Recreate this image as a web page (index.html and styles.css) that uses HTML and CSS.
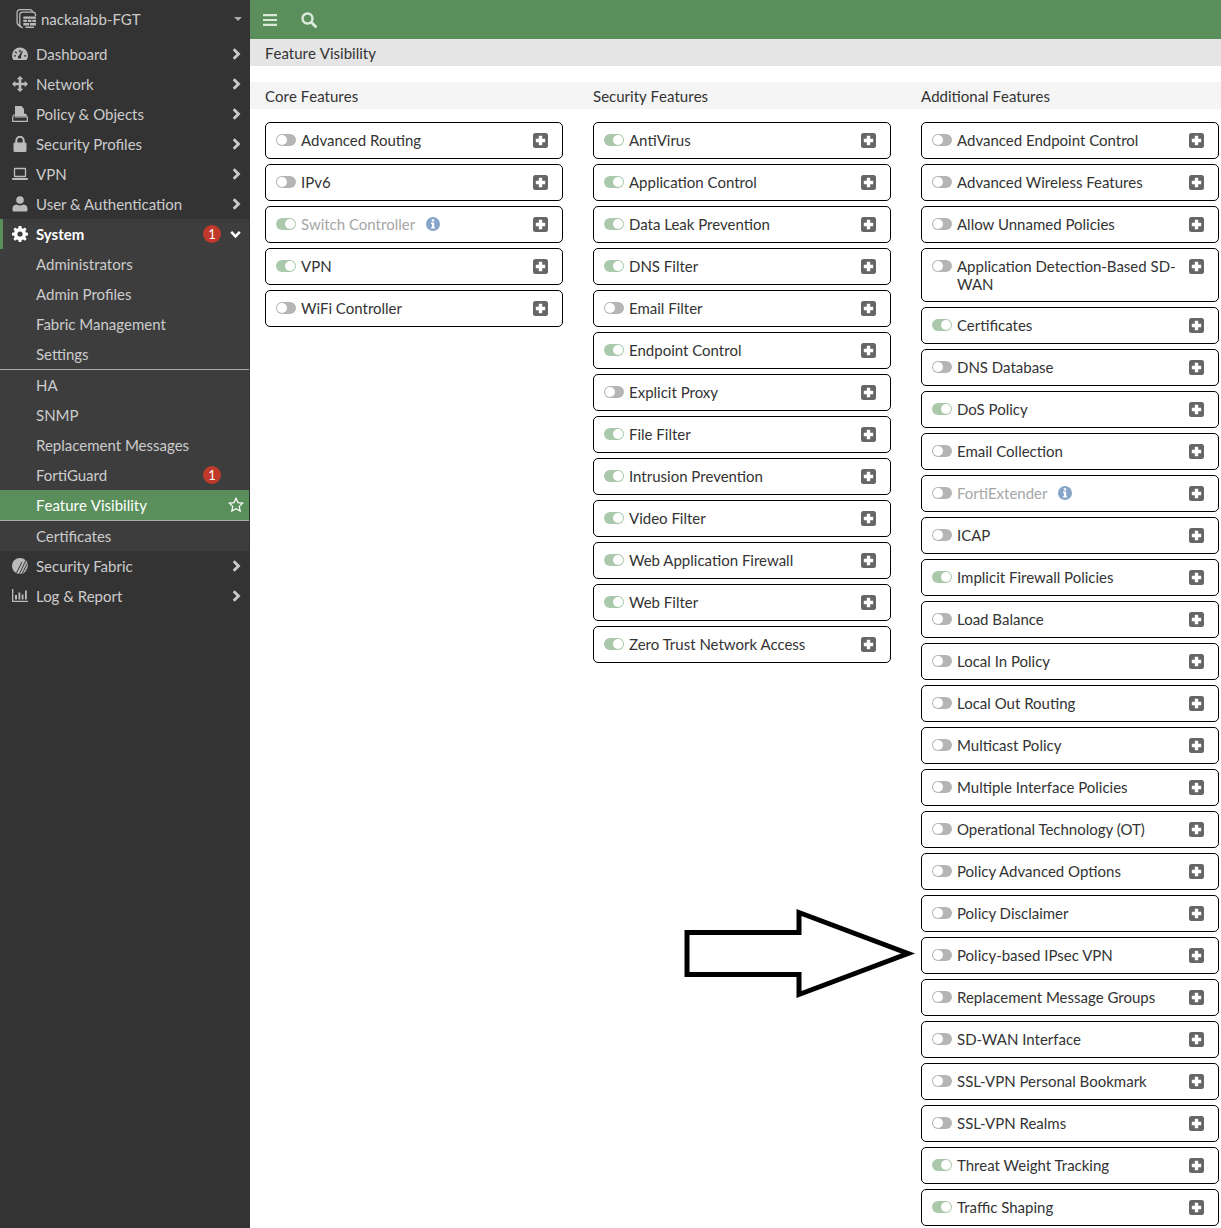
FILE: index.html
```html
<!DOCTYPE html>
<html lang="en">
<head>
<meta charset="utf-8">
<title>Feature Visibility</title>
<link rel="stylesheet" href="styles.css">
</head>
<body>
<svg class="defs" width="0" height="0" aria-hidden="true">
  <symbol id="plus" viewBox="0 0 15 15"><path fill="#666" fill-rule="evenodd" d="M2.500 0h10A2.500 2.500 0 0 1 15 2.500v10a2.500 2.500 0 0 1-2.500 2.500h-10A2.500 2.500 0 0 1 0 12.500v-10A2.500 2.500 0 0 1 2.500 0ZM5.800 2.800v3h-3v3.400h3v3h3.400v-3h3V5.800h-3v-3Z"/></symbol>
  <symbol id="chev" viewBox="0 0 9 12"><path fill="none" stroke="currentColor" stroke-width="2.800" d="M1.700 1.300 6.500 6l-4.800 4.700"/></symbol>
  <symbol id="info" viewBox="0 0 14 14"><path fill="#86a5c9" fill-rule="evenodd" d="M7 0a7 7 0 1 1 0 14A7 7 0 0 1 7 0ZM5.800 2.300v2.200h2.400V2.300ZM5 5.600v1.300h.9v3.300H5v1.400h4v-1.400h-.8V5.600Z"/></symbol>
</svg>

<aside class="sidebar">
  <div class="brand">
    <svg class="brand-icon" viewBox="0 0 20 20"><path fill="none" stroke="#bbb" stroke-width="1.200" d="M4 17.500C1.800 16.500 1 15 1 13V4.500C1 2.500 2 1.500 4 1.500h9c1.500 0 2.500.8 3 2"/><path fill="none" stroke="#bbb" stroke-width="1.200" d="M6.500 18.800C4.600 18.600 3.600 17.500 3.600 15.500V6.500c0-1.700 1-2.600 2.700-2.600h9.500c1.800 0 2.800 1 2.800 2.700v1"/><path fill="#bbb" d="M7 8h12v2.300H7zM7 11.200h3.400v2.200H7zM11.300 11.200h3.400v2.200h-3.400zM15.600 11.200H19v2.200h-3.400zM7 14.300h5.500v2.400H7zM13.300 14.300H19v2.400h-5.700zM9 17.500h8v1.500H9z"/></svg>
    <span class="brand-name">nackalabb-FGT</span>
    <span class="caret"></span>
  </div>
  <nav>
    <a class="nav-item"><svg class="nav-icon" viewBox="0 0 16 14"><path fill="#bbb" fill-rule="evenodd" d="M8 0.500a8 8 0 0 1 8 8c0 1.900-.6 3.400-1.500 4.500H1.500C.6 11.900 0 10.400 0 8.500a8 8 0 0 1 8-8ZM7.300 3v2.300h1.400V3ZM3.600 4.300 2.700 5.300l1.500 1.500 1-1ZM9.800 4 7 8.600a1.600 1.600 0 1 0 2 .7l1.700-5ZM1.800 8.200v1.400H4V8.200ZM12 8.200v1.400h2.300V8.200Z"/></svg><span class="nav-label">Dashboard</span><svg class="chev"><use href="#chev"/></svg></a>
    <a class="nav-item"><svg class="nav-icon" viewBox="0 0 16 16"><path fill="#bbb" d="M8 0l3.300 3.300H9.300v3.400h3.400v-2L16 8l-3.300 3.300v-2H9.300v3.400h2L8 16l-3.300-3.300h2V9.300H3.300v2L0 8l3.300-3.300v2h3.400V3.300h-2Z"/></svg><span class="nav-label">Network</span><svg class="chev"><use href="#chev"/></svg></a>
    <a class="nav-item"><svg class="nav-icon" viewBox="0 0 16 16"><path fill="#bbb" d="M3 0h6.500L12 3v4.500c2 .1 3 1 3 2.500H2.600L3 8Z"/><path fill="none" stroke="#bbb" stroke-width="1.200" d="M2.500 8.500C1.300 9 .7 10 .7 12v3.300h14.600V10.800H2.600"/></svg><span class="nav-label">Policy &amp; Objects</span><svg class="chev"><use href="#chev"/></svg></a>
    <a class="nav-item"><svg class="nav-icon" viewBox="0 0 16 16"><path fill="none" stroke="#bbb" stroke-width="2" d="M4.300 7V4.500a3.700 3.700 0 0 1 7.400 0V7"/><rect x="1.500" y="6.500" width="13" height="9.500" rx="1.300" fill="#bbb"/></svg><span class="nav-label">Security Profiles</span><svg class="chev"><use href="#chev"/></svg></a>
    <a class="nav-item"><svg class="nav-icon" viewBox="0 0 16 14"><rect x="2.500" y="1.500" width="11" height="8" rx=".6" fill="none" stroke="#bbb" stroke-width="1.300"/><path fill="#bbb" d="M0 11h16v1.300l-1 .7H1l-1-.7Z"/></svg><span class="nav-label">VPN</span><svg class="chev"><use href="#chev"/></svg></a>
    <a class="nav-item"><svg class="nav-icon" viewBox="0 0 16 16"><circle cx="8" cy="4" r="3.800" fill="#bbb"/><path fill="#bbb" d="M4.500 8.500c2 1.200 5 1.200 7 0 2.500.3 4 1.700 4 4v1.500c0 1-.7 1.500-1.500 1.500H2c-.8 0-1.500-.5-1.500-1.500v-1.500c0-2.300 1.500-3.700 4-4Z"/></svg><span class="nav-label">User &amp; Authentication</span><svg class="chev"><use href="#chev"/></svg></a>
    <div class="nav-group">
      <a class="nav-item nav-open"><svg class="nav-icon" viewBox="0 0 16 16"><path fill="#fff" fill-rule="evenodd" d="M6.700 0h2.600l.4 2.200 1.300.6L12.900 1.500l1.700 1.700-1.300 1.900.6 1.300 2.100.4v2.600l-2.100.4-.6 1.300 1.300 1.900-1.700 1.700-1.900-1.300-1.300.6-.4 2.200H6.700l-.4-2.200-1.300-.6-1.900 1.300-1.700-1.700 1.300-1.900-.6-1.300L0 9.400V6.800l2.100-.4.600-1.300-1.300-1.900 1.700-1.700L5 2.800l1.300-.6ZM8 5.400a2.600 2.600 0 1 0 0 5.200 2.600 2.600 0 0 0 0-5.200Z"/></svg><span class="nav-label">System</span><span class="badge">1</span><svg class="chev-down" viewBox="0 0 12 9"><path fill="none" stroke="#fff" stroke-width="2.800" d="M1.300 1.700 6 6.500l4.700-4.800"/></svg></a>
      <a class="sub-item"><span class="nav-label">Administrators</span></a>
      <a class="sub-item"><span class="nav-label">Admin Profiles</span></a>
      <a class="sub-item"><span class="nav-label">Fabric Management</span></a>
      <a class="sub-item sub-split"><span class="nav-label">Settings</span></a>
      <a class="sub-item"><span class="nav-label">HA</span></a>
      <a class="sub-item"><span class="nav-label">SNMP</span></a>
      <a class="sub-item"><span class="nav-label">Replacement Messages</span></a>
      <a class="sub-item"><span class="nav-label">FortiGuard</span><span class="badge badge-end">1</span></a>
      <a class="sub-item sub-active"><span class="nav-label">Feature Visibility</span><svg class="star" viewBox="0 0 16 16"><path fill="none" stroke="#fff" stroke-width="1.200" d="M8 1.300l2 4.300 4.700.6-3.400 3.200.9 4.700L8 11.800l-4.200 2.300.9-4.700L1.300 6.200 6 5.600Z"/></svg></a>
      <a class="sub-item"><span class="nav-label">Certificates</span></a>
    </div>
    <a class="nav-item"><svg class="nav-icon" viewBox="0 0 16 16"><defs><clipPath id="disc"><circle cx="8" cy="8" r="8"/></clipPath></defs><circle cx="8" cy="8" r="8" fill="#bbb"/><path clip-path="url(#disc)" stroke="#333" stroke-width="1" d="M7 17 14 2M9.500 17 16 4M12 17 18 5M4.500 15 10 4"/></svg><span class="nav-label">Security Fabric</span><svg class="chev"><use href="#chev"/></svg></a>
    <a class="nav-item"><svg class="nav-icon" viewBox="0 0 16 14"><path fill="#bbb" d="M0 0h1.300v11.800H16V13H0ZM3 6h2v4.500H3ZM6.500 3.500h1.800v7H6.500ZM9.700 5.500h1.800v5H9.700ZM13 1.500h1.800v9H13Z"/></svg><span class="nav-label">Log &amp; Report</span><svg class="chev"><use href="#chev"/></svg></a>
  </nav>
</aside>

<main class="main">
  <header class="topbar">
    <svg class="bars" viewBox="0 0 14 12"><path fill="#dceadc" d="M0 0h14v2.200H0zM0 4.900h14v2.200H0zM0 9.800h14V12H0z"/></svg>
    <svg class="search" viewBox="0 0 16 16"><circle cx="6.500" cy="6.500" r="5" fill="none" stroke="#dceadc" stroke-width="2.400"/><path stroke="#dceadc" stroke-width="3" stroke-linecap="round" d="M10.500 10.500l4 4"/></svg>
  </header>
  <div class="page-title">Feature Visibility</div>
  <div class="col-heads">
    <div class="col-head">Core Features</div>
    <div class="col-head">Security Features</div>
    <div class="col-head">Additional Features</div>
  </div>
  <div class="columns">
    <div class="column">
      <div class="card"><span class="toggle"></span><span class="card-label">Advanced Routing</span><svg class="plus"><use href="#plus"/></svg></div>
      <div class="card"><span class="toggle"></span><span class="card-label">IPv6</span><svg class="plus"><use href="#plus"/></svg></div>
      <div class="card card-muted"><span class="toggle on"></span><span class="card-label">Switch Controller<svg class="info"><use href="#info"/></svg></span><svg class="plus"><use href="#plus"/></svg></div>
      <div class="card"><span class="toggle on"></span><span class="card-label">VPN</span><svg class="plus"><use href="#plus"/></svg></div>
      <div class="card"><span class="toggle"></span><span class="card-label">WiFi Controller</span><svg class="plus"><use href="#plus"/></svg></div>
    </div>
    <div class="column">
      <div class="card"><span class="toggle on"></span><span class="card-label">AntiVirus</span><svg class="plus"><use href="#plus"/></svg></div>
      <div class="card"><span class="toggle on"></span><span class="card-label">Application Control</span><svg class="plus"><use href="#plus"/></svg></div>
      <div class="card"><span class="toggle on"></span><span class="card-label">Data Leak Prevention</span><svg class="plus"><use href="#plus"/></svg></div>
      <div class="card"><span class="toggle on"></span><span class="card-label">DNS Filter</span><svg class="plus"><use href="#plus"/></svg></div>
      <div class="card"><span class="toggle"></span><span class="card-label">Email Filter</span><svg class="plus"><use href="#plus"/></svg></div>
      <div class="card"><span class="toggle on"></span><span class="card-label">Endpoint Control</span><svg class="plus"><use href="#plus"/></svg></div>
      <div class="card"><span class="toggle"></span><span class="card-label">Explicit Proxy</span><svg class="plus"><use href="#plus"/></svg></div>
      <div class="card"><span class="toggle on"></span><span class="card-label">File Filter</span><svg class="plus"><use href="#plus"/></svg></div>
      <div class="card"><span class="toggle on"></span><span class="card-label">Intrusion Prevention</span><svg class="plus"><use href="#plus"/></svg></div>
      <div class="card"><span class="toggle on"></span><span class="card-label">Video Filter</span><svg class="plus"><use href="#plus"/></svg></div>
      <div class="card"><span class="toggle on"></span><span class="card-label">Web Application Firewall</span><svg class="plus"><use href="#plus"/></svg></div>
      <div class="card"><span class="toggle on"></span><span class="card-label">Web Filter</span><svg class="plus"><use href="#plus"/></svg></div>
      <div class="card"><span class="toggle on"></span><span class="card-label">Zero Trust Network Access</span><svg class="plus"><use href="#plus"/></svg></div>
    </div>
    <div class="column">
      <div class="card"><span class="toggle"></span><span class="card-label">Advanced Endpoint Control</span><svg class="plus"><use href="#plus"/></svg></div>
      <div class="card"><span class="toggle"></span><span class="card-label">Advanced Wireless Features</span><svg class="plus"><use href="#plus"/></svg></div>
      <div class="card"><span class="toggle"></span><span class="card-label">Allow Unnamed Policies</span><svg class="plus"><use href="#plus"/></svg></div>
      <div class="card"><span class="toggle"></span><span class="card-label">Application Detection-Based SD-WAN</span><svg class="plus"><use href="#plus"/></svg></div>
      <div class="card"><span class="toggle on"></span><span class="card-label">Certificates</span><svg class="plus"><use href="#plus"/></svg></div>
      <div class="card"><span class="toggle"></span><span class="card-label">DNS Database</span><svg class="plus"><use href="#plus"/></svg></div>
      <div class="card"><span class="toggle on"></span><span class="card-label">DoS Policy</span><svg class="plus"><use href="#plus"/></svg></div>
      <div class="card"><span class="toggle"></span><span class="card-label">Email Collection</span><svg class="plus"><use href="#plus"/></svg></div>
      <div class="card card-muted"><span class="toggle"></span><span class="card-label">FortiExtender<svg class="info"><use href="#info"/></svg></span><svg class="plus"><use href="#plus"/></svg></div>
      <div class="card"><span class="toggle"></span><span class="card-label">ICAP</span><svg class="plus"><use href="#plus"/></svg></div>
      <div class="card"><span class="toggle on"></span><span class="card-label">Implicit Firewall Policies</span><svg class="plus"><use href="#plus"/></svg></div>
      <div class="card"><span class="toggle"></span><span class="card-label">Load Balance</span><svg class="plus"><use href="#plus"/></svg></div>
      <div class="card"><span class="toggle"></span><span class="card-label">Local In Policy</span><svg class="plus"><use href="#plus"/></svg></div>
      <div class="card"><span class="toggle"></span><span class="card-label">Local Out Routing</span><svg class="plus"><use href="#plus"/></svg></div>
      <div class="card"><span class="toggle"></span><span class="card-label">Multicast Policy</span><svg class="plus"><use href="#plus"/></svg></div>
      <div class="card"><span class="toggle"></span><span class="card-label">Multiple Interface Policies</span><svg class="plus"><use href="#plus"/></svg></div>
      <div class="card"><span class="toggle"></span><span class="card-label">Operational Technology (OT)</span><svg class="plus"><use href="#plus"/></svg></div>
      <div class="card"><span class="toggle"></span><span class="card-label">Policy Advanced Options</span><svg class="plus"><use href="#plus"/></svg></div>
      <div class="card"><span class="toggle"></span><span class="card-label">Policy Disclaimer</span><svg class="plus"><use href="#plus"/></svg></div>
      <div class="card"><span class="toggle"></span><span class="card-label">Policy-based IPsec VPN</span><svg class="plus"><use href="#plus"/></svg></div>
      <div class="card"><span class="toggle"></span><span class="card-label">Replacement Message Groups</span><svg class="plus"><use href="#plus"/></svg></div>
      <div class="card"><span class="toggle"></span><span class="card-label">SD-WAN Interface</span><svg class="plus"><use href="#plus"/></svg></div>
      <div class="card"><span class="toggle"></span><span class="card-label">SSL-VPN Personal Bookmark</span><svg class="plus"><use href="#plus"/></svg></div>
      <div class="card"><span class="toggle"></span><span class="card-label">SSL-VPN Realms</span><svg class="plus"><use href="#plus"/></svg></div>
      <div class="card"><span class="toggle on"></span><span class="card-label">Threat Weight Tracking</span><svg class="plus"><use href="#plus"/></svg></div>
      <div class="card"><span class="toggle on"></span><span class="card-label">Traffic Shaping</span><svg class="plus"><use href="#plus"/></svg></div>
    </div>
  </div>
  <svg class="arrow" viewBox="0 0 240 96"><path fill="#fff" stroke="#000" stroke-width="5" stroke-linejoin="miter" stroke-miterlimit="6" d="M3 24.500H115V4.500L224 45.500 115 86.500V66.500H3Z"/></svg>
</main>
</body>
</html>
```
FILE: styles.css
```css
* { box-sizing: border-box; }
html, body { margin: 0; height: 100%; }
body {
  display: flex;
  height: 1228px;
  overflow: hidden;
  background: #fff;
  color: #333;
  font: 15px/18px Lato, "Liberation Sans", sans-serif;
}
.defs { position: absolute; }

/* Sidebar */
.sidebar {
  flex: 0 0 250px;
  background: #333;
  color: #ccc;
}
.brand {
  display: flex;
  align-items: center;
  height: 37px;
  margin-bottom: 2px;
  padding: 0 8px 0 16px;
}
.brand-icon { width: 21px; height: 21px; margin-right: 4px; }
.brand-name { flex: 1; }
.caret {
  width: 0;
  height: 0;
  border: 4px solid transparent;
  border-top: 4px solid #aaa;
  border-bottom: 0;
}
.nav-item, .sub-item {
  display: flex;
  align-items: center;
  height: 30px;
}
.nav-item { padding: 0 9px 0 12px; }
.nav-icon { width: 16px; height: 16px; margin-right: 8px; flex: none; }
.nav-label { flex: 1; }
.chev { width: 9px; height: 12px; flex: none; color: #ccc; }
.nav-group { width: 249px; background: #3d3d3d; }
.nav-open {
  padding-right: 8px;
  color: #fff;
  font-weight: 700;
  box-shadow: inset 3px 0 0 #5a8f5c;
}
.chev-down { width: 11px; height: 9px; margin-left: 9px; flex: none; }
.badge {
  width: 18px;
  height: 18px;
  border-radius: 50%;
  background: #c0392b;
  color: #fff;
  font-size: 13px;
  font-weight: 400;
  line-height: 18px;
  text-align: center;
  flex: none;
}
.badge-end { margin-right: 23px; }
.sub-item { padding: 0 5px 0 36px; }
.sub-split { height: 31px; padding-bottom: 1px; border-bottom: 1px solid #aaa; }
.sub-active {
  height: 31px;
  padding-bottom: 1px;
  background: #5a8f5c;
  color: #fff;
  border-bottom: 1px solid #aaa;
  font-kerning: none;
}
.star { width: 16px; height: 16px; flex: none; }

/* Main */
.main { position: relative; flex: 1; min-width: 0; }
.topbar {
  display: flex;
  align-items: center;
  gap: 24px;
  height: 39px;
  padding-left: 13px;
  background: #5a8f5c;
}
.bars { width: 14px; height: 12px; }
.search { width: 16px; height: 16px; }
.page-title {
  height: 27px;
  padding: 5px 15px 0;
  background: #e5e5e5;
  font-kerning: none;
}
.col-heads {
  display: flex;
  gap: 30px;
  height: 27px;
  margin-top: 16px;
  padding: 5px 0 0 15px;
  background: #f5f5f5;
  font-kerning: none;
}
.col-head { flex: none; width: 298px; }
.columns {
  display: flex;
  gap: 30px;
  padding: 13px 0 0 15px;
}
.column {
  display: flex;
  flex: none;
  flex-direction: column;
  gap: 5px;
  width: 298px;
}
.card {
  display: flex;
  align-items: flex-start;
  min-height: 37px;
  padding: 8px 14px 8px 10px;
  border: 1px solid #000;
  border-radius: 5px;
}
.card-label { flex: 1; min-width: 0; }
.card-muted .card-label { color: #a6a6a6; }
.toggle {
  position: relative;
  flex: none;
  width: 20px;
  height: 12px;
  margin: 3px 5px 0 0;
  border-radius: 6px;
  background: #b5b5b5;
}
.toggle::after {
  content: "";
  position: absolute;
  top: 1px;
  left: 1px;
  width: 10px;
  height: 10px;
  border-radius: 50%;
  background: #fff;
}
.toggle.on { background: #a9c9aa; }
.toggle.on::after { left: 9px; }
.plus { flex: none; width: 15px; height: 15px; margin: 2px 0 0 8px; }
.info { width: 14px; height: 14px; margin-left: 11px; vertical-align: -1px; }
.arrow {
  position: absolute;
  left: 434px;
  top: 908px;
  width: 240px;
  height: 96px;
}
```
